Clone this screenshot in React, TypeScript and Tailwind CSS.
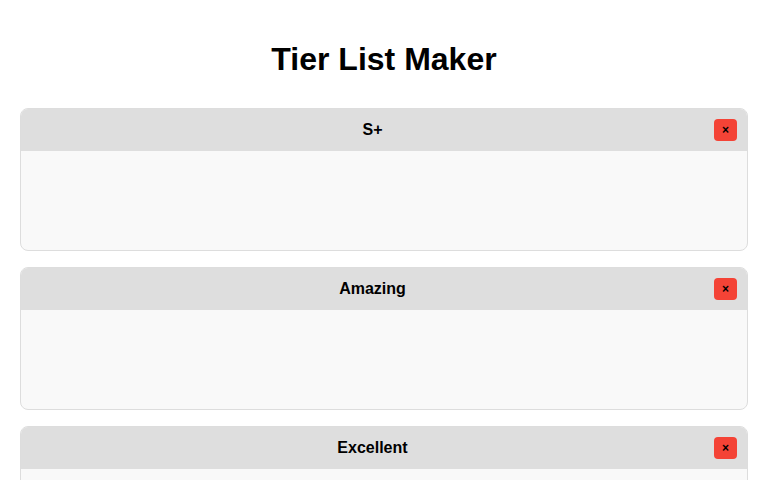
const tiers = ["S+", "Amazing", "Excellent"];

function TierRow({ name }: { name: string }) {
  return (
    <div className="overflow-hidden rounded-lg border border-[#dddddd] bg-[#f9f9f9]">
      <div className="flex items-center bg-[#dedede] p-[10px]">
        <h2 className="flex-1 text-center text-base font-bold leading-[22px] text-black">{name}</h2>
        <button className="flex h-[22px] w-[23px] items-center justify-center rounded bg-[#f44336] text-xs font-bold leading-none text-black">
          ×
        </button>
      </div>
      <div className="h-[99px]" />
    </div>
  );
}

export default function App() {
  return (
    <div className="min-h-screen bg-white px-5 pt-[41px] font-['Liberation_Sans',Arial,sans-serif]">
      <h1 className="mb-[30px] text-center text-[32px] font-bold leading-[37px] text-black">Tier List Maker</h1>
      <div className="flex flex-col gap-4">
        {tiers.map((t) => (
          <TierRow key={t} name={t} />
        ))}
      </div>
    </div>
  );
}
